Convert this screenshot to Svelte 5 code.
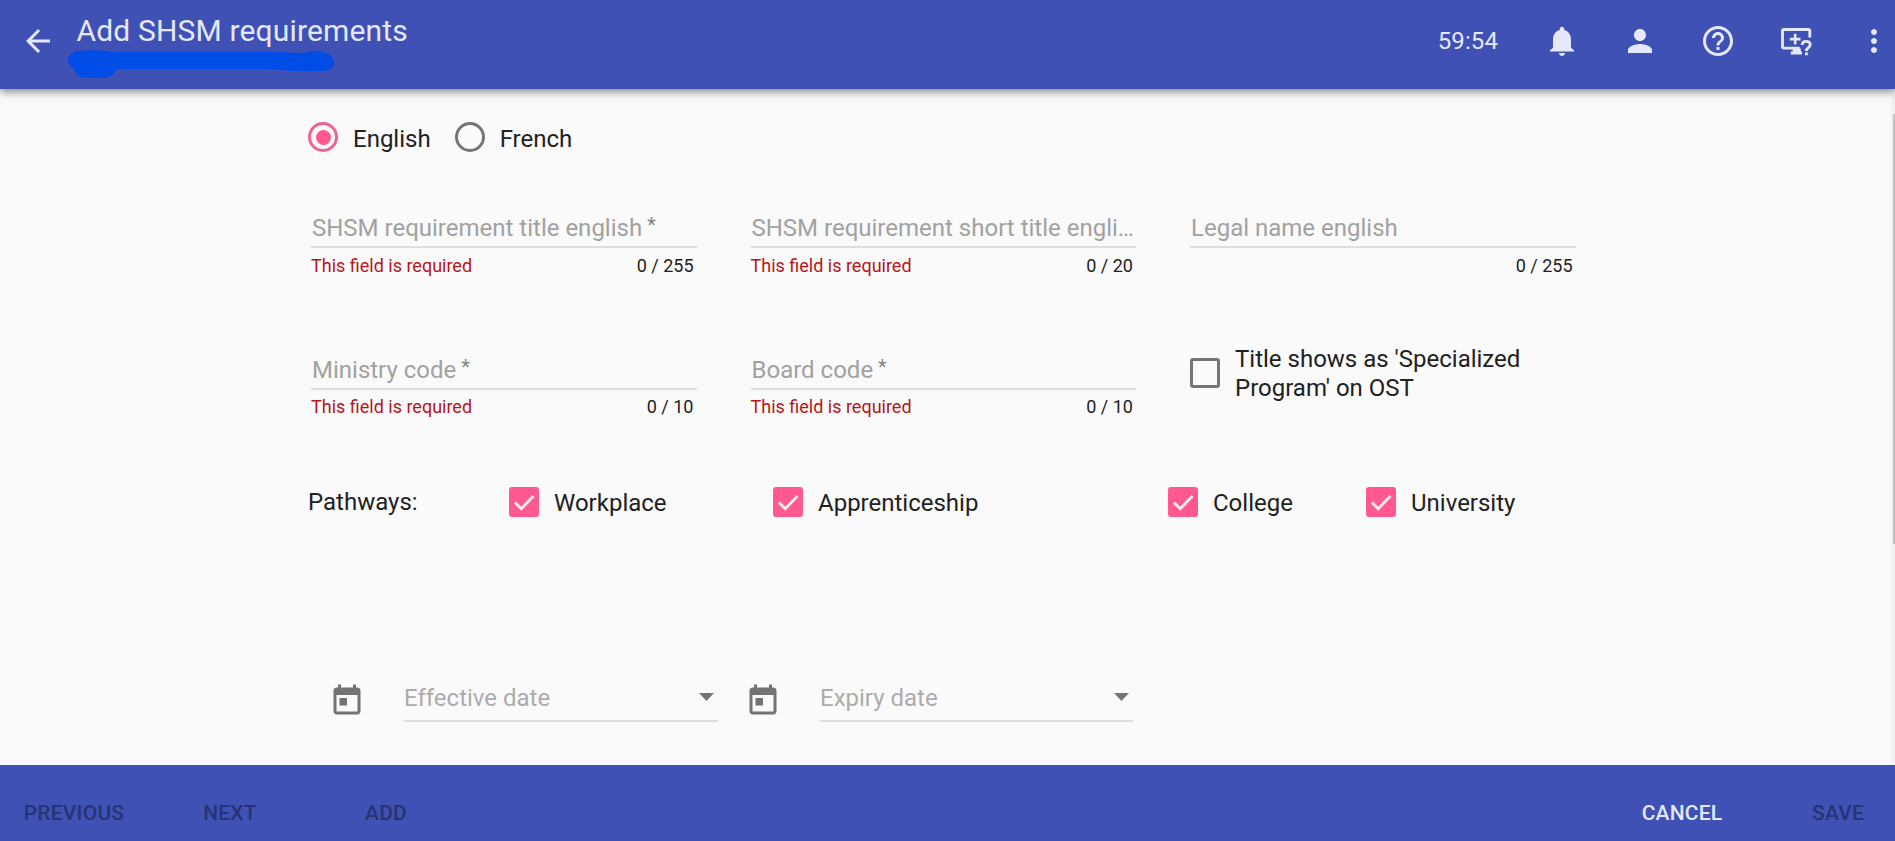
<script>
  const fields = [
    { label: 'SHSM requirement title english', required: true, max: 255 },
    { label: 'SHSM requirement short title engli…', required: true, star: false, max: 20 },
    { label: 'Legal name english', required: false, max: 255 }
  ];
  const codes = [
    { label: 'Ministry code', required: true, max: 10 },
    { label: 'Board code', required: true, max: 10 }
  ];
  const pathways = ['Workplace', 'Apprenticeship', 'College', 'University'];
  const dates = ['Effective date', 'Expiry date'];
  const icons = [
    'M12 22c1.1 0 2-.9 2-2h-4c0 1.1.89 2 2 2zm6-5.500v-5.500c0-3.070-1.640-5.640-4.500-6.320V4c0-.83-.67-1.500-1.500-1.500s-1.500.67-1.500 1.500v.68C7.630 5.360 6 7.920 6 11v5.500l-2 1.700V19h16v-.8z',
    'M12 12c2.210 0 4-1.790 4-4s-1.790-4-4-4-4 1.790-4 4 1.790 4 4 4zm0 2c-2.670 0-8 1.340-8 4v2h16v-2c0-2.660-5.330-4-8-4z',
    'M11 18h2v-2h-2v2zm1-16C6.480 2 2 6.480 2 12s4.480 10 10 10 10-4.480 10-10S17.520 2 12 2zm0 18c-4.410 0-8-3.590-8-8s3.590-8 8-8 8 3.590 8 8-3.590 8-8 8zm0-14c-2.210 0-4 1.790-4 4h2c0-1.100.9-2 2-2s2 .9 2 2c0 2-3 1.750-3 5h2c0-2.250 3-2.500 3-5 0-2.210-1.790-4-4-4z'
  ];
</script>

{#snippet field(f)}
  <div class="field">
    <div class="label">{f.label}{#if f.required && f.star !== false}<span class="star">*</span>{/if}</div>
    <div class="hint">
      <span class="error">{f.required ? 'This field is required' : ''}</span>
      <span>0 / {f.max}</span>
    </div>
  </div>
{/snippet}

<div class="app">
  <header>
    <svg class="back" viewBox="0 0 24 24"><path d="M20 11H7.830l5.590-5.590L12 4l-8 8 8 8 1.410-1.410L7.830 13H20z" /></svg>
    <div class="heading">
      <h1>Add SHSM requirements</h1>
      <svg class="scribble" viewBox="0 0 270 32">
        <path d="M10 1C3 2 0 6 0 10c0 4 3 7 6 9 2 8 8 9 19 9 13 0 21 0 23-9h150c14 0 18 2 30 2h26c8 0 12-4 12-9 0-6-5-8-10-9-4-3-16-2-20 0-13 0-18-1-26-1H48C35 0 23 0 10 1z" />
      </svg>
    </div>
    <span class="timer">59:54</span>
    {#each icons as d}
      <svg viewBox="0 0 24 24"><path {d} /></svg>
    {/each}
    <svg viewBox="0 0 24 24">
      <path d="M14.500 16.700H4Q3 16.700 3 15.700V5.300Q3 4.300 4 4.300H20.200Q21.200 4.300 21.200 5.300V9.700" fill="none" stroke="currentColor" stroke-width="1.900" />
      <path d="M10.600 7.200h1.700v2.700h2.700v1.700h-2.700v2.700h-1.700v-2.700H7.900V9.900h2.700zM9.800 17h5.400v2h.8v2H8.500v-2h1.300z" />
      <path d="M16.100 14.700q0-2.400 2.700-2.400t2.700 2.200c0 1.900-2.600 2-2.600 4.100" fill="none" stroke="currentColor" stroke-width="1.800" />
      <path d="M18 19.600h1.900v1.900h-1.900z" />
    </svg>
    <svg viewBox="0 0 24 24"><path d="M12 8c1.100 0 2-.9 2-2s-.9-2-2-2-2 .9-2 2 .9 2 2 2zm0 2c-1.100 0-2 .9-2 2s.9 2 2 2 2-.9 2-2-.9-2-2-2zm0 6c-1.100 0-2 .9-2 2s.9 2 2 2 2-.9 2-2-.9-2-2-2z" /></svg>
  </header>

  <div class="body">
    <main>
      <div class="radios">
        <span class="radio on"></span><span class="text">English</span>
        <span class="radio"></span><span class="text">French</span>
      </div>

      <div class="row first">
        {#each fields as f}{@render field(f)}{/each}
      </div>

      <div class="row second">
        {#each codes as f}{@render field(f)}{/each}
        <div class="ost">
          <span class="box"></span>
          <span class="ost-text">Title shows as 'Specialized Program' on OST</span>
        </div>
      </div>

      <div class="pathways">
        <span class="caption">Pathways:</span>
        {#each pathways as p}
          <div class="check">
            <span class="box on"><svg viewBox="0 0 30 30"><path d="M6 15.500l6.200 6.200L24.500 9" /></svg></span>
            <span class="text">{p}</span>
          </div>
        {/each}
      </div>

      <div class="dates">
        {#each dates as d}
          <div class="date">
            <svg viewBox="0 0 24 24"><path d="M19 3h-1V1h-2v2H8V1H6v2H5c-1.110 0-1.990.9-1.990 2L3 19c0 1.100.89 2 2 2h14c1.100 0 2-.9 2-2V5c0-1.100-.9-2-2-2zm0 16H5V8h14v11zM7 10h5v5H7z" /></svg>
            <div class="picker"><span>{d}</span><i></i></div>
          </div>
        {/each}
      </div>
    </main>
    <div class="track"><div class="thumb"></div></div>
  </div>

  <footer>
    <button disabled>PREVIOUS</button>
    <button disabled>NEXT</button>
    <button disabled>ADD</button>
    <span class="spacer"></span>
    <button>CANCEL</button>
    <button disabled>SAVE</button>
  </footer>
</div>

<style>
  :global(body) { margin: 0; overflow: hidden; }
  .app {
    display: flex; flex-direction: column; width: 100%; height: 841px; overflow: hidden;
    background: #fafafa; color: #212121;
    font: 24px/30px Roboto, sans-serif;
  }
  .app * { box-sizing: border-box; }
  header {
    display: flex; align-items: center; height: 89px; flex: none; padding: 0 3px 7px 20px;
    background: #3f51b5; color: #e5e8f8; z-index: 1;
    box-shadow: 0 2px 9px rgba(0, 0, 0, .55);
  }
  header > svg { width: 36px; height: 36px; margin-left: 42px; flex: none; fill: currentColor; }
  header > svg.back { margin-left: 0; }
  .heading { position: relative; align-self: flex-start; margin: 13px auto 0 20.500px; }
  h1 { margin: 0; font-size: 30px; font-weight: 400; line-height: 36px; letter-spacing: .16px; white-space: nowrap; }
  .scribble { position: absolute; left: -9px; top: 37px; width: 270px; height: 32px; fill: #004ce6; }
  .timer { margin-right: 4px; letter-spacing: .1px; }
  header > .timer + svg { margin-left: 42px; }

  .body { display: flex; flex: 1; min-height: 0; }
  main { flex: 1; padding: 33px 0 0 308px; }
  .track { width: 4px; flex: none; background: #f1f1f1; padding: 25px 0 0 2px; }
  .thumb { height: 430px; background: #c1c1c1; }

  .radios { display: flex; align-items: center; height: 30px; }
  .radios .text { margin: 3px 24px 0 15px; }
  .radio { display: grid; place-items: center; width: 30px; height: 30px; border: 3px solid #757575; border-radius: 50%; }
  .radio.on { border-color: #f06292; }
  .radio.on::after { content: ''; width: 15px; height: 15px; border-radius: 50%; background: #ff5990; }

  .row { display: grid; grid-template-columns: repeat(3, 385.500px); column-gap: 54px; margin-left: 3px; }
  .first { margin-top: 61px; }
  .second { margin-top: 77px; }
  .field { min-width: 0; }
  .label {
    height: 35px; padding-left: 1px; border-bottom: 2px solid #dedede;
    color: #a1a1a1; white-space: nowrap;
  }
  .star { font-size: 20px; line-height: 20px; position: relative; top: -4px; margin-left: 5px; color: #858585; }
  .hint { display: flex; justify-content: space-between; padding: 0 3px 0 0; margin-top: 6px; font-size: 18px; line-height: 24px; }
  .second .hint { margin-top: 5px; }
  .error { color: #b71518; }
  .box { width: 30px; height: 30px; flex: none; border: 3px solid #757575; border-radius: 3px; }
  .box.on { border: 0; background: #ff5990; }
  .box svg { display: block; fill: none; stroke: #fde8ef; stroke-width: 3; }
  .ost { display: flex; align-items: center; gap: 15px; height: 58px; margin-top: -10px; }
  .ost .box { margin-top: -2px; }
  .ost-text { width: 300px; line-height: 29px; }

  .pathways {
    display: grid; grid-template-columns: 201px 264px 395px 198px 200px;
    align-items: center; height: 30px; margin-top: 68px;
  }
  .caption { margin-top: -1px; }
  .check { display: flex; gap: 15px; }
  .check .text { margin-top: 1px; }

  .dates { display: flex; gap: 26.500px; margin: 166px 0 0 20.500px; }
  .date { display: flex; gap: 39.500px; width: 389.500px; }
  .date svg { width: 36px; height: 36px; flex: none; fill: #737373; }
  .picker {
    display: flex; justify-content: space-between; flex: 1; height: 39px;
    padding: 0 4px 0 0; border-bottom: 2px solid #dedede; color: #acacac;
  }
  .picker i { width: 15px; height: 8px; margin-top: 10px; background: #757575; clip-path: polygon(0 0, 100% 0, 50% 100%); }
  .date:last-child { width: 388.500px; }

  footer { display: flex; gap: 42px; height: 76px; flex: none; padding: 32px 0 0 17px; background: #3f51b5; }
  .spacer { flex: 1; }
  button {
    width: 114px; height: 32px; padding: 0; border: 0; background: none;
    font: 500 21px/32px Roboto, sans-serif; letter-spacing: .2px; color: #e5e8fa; white-space: nowrap;
  }
  button:disabled { color: #273474; }
</style>
